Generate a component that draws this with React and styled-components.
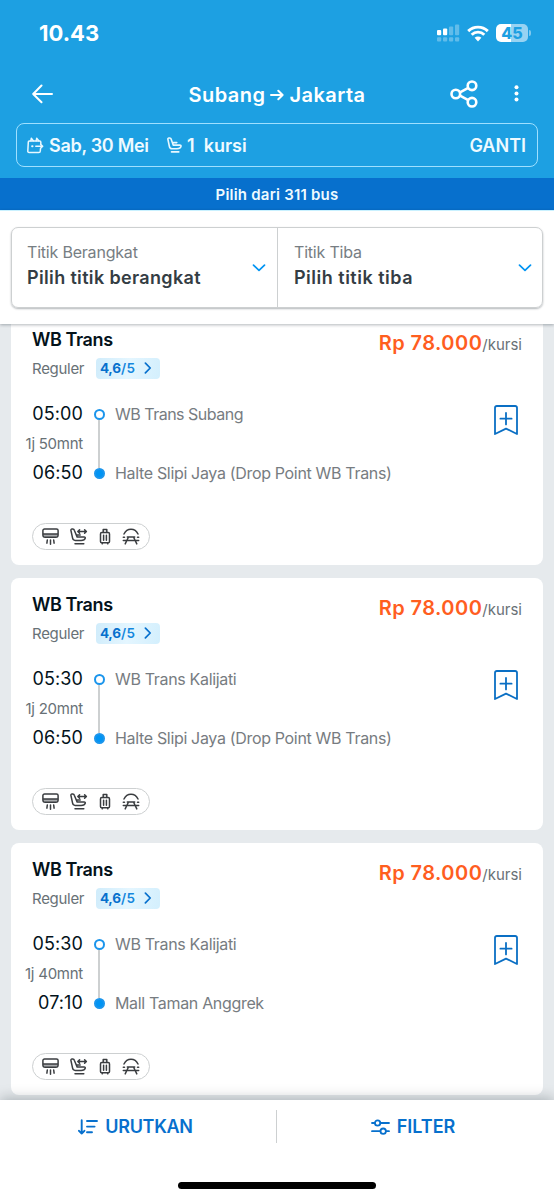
import React from 'react';
import styled, { createGlobalStyle } from 'styled-components';

const trips = [
    { id: 1, depart: '05:00', arrive: '06:50', duration: '1j 50mnt', from: 'WB Trans Subang', to: 'Halte Slipi Jaya (Drop Point WB Trans)' },
    { id: 2, depart: '05:30', arrive: '06:50', duration: '1j 20mnt', from: 'WB Trans Kalijati', to: 'Halte Slipi Jaya (Drop Point WB Trans)' },
    { id: 3, depart: '05:30', arrive: '07:10', duration: '1j 40mnt', from: 'WB Trans Kalijati', to: 'Mall Taman Anggrek' },
];

const SignalIcon = () => (
    <svg width="23" height="18" viewBox="0 0 23 18" fill="#fff">
        <rect x="0" y="6" width="4.2" height="5.2" rx="1" />
        <rect x="6" y="4.5" width="4.2" height="6.7" rx="1" />
        <g opacity=".3">
            <rect x="12" y="2.5" width="4.2" height="8.7" rx="1" />
            <rect x="18" y="0.5" width="4.2" height="10.7" rx="1" />
            <rect x="0" y="13.3" width="4.2" height="4.2" rx="1" />
            <rect x="6" y="13.3" width="4.2" height="4.2" rx="1" />
            <rect x="12" y="13.3" width="4.2" height="4.2" rx="1" />
            <rect x="18" y="13.3" width="4.2" height="4.2" rx="1" />
        </g>
    </svg>
);

const WifiIcon = () => (
    <svg width="22" height="17" viewBox="0 0 22 17" fill="none" stroke="#fff" strokeWidth="2.9">
        <path d="M1.2 6.1a14 14 0 0 1 19.6 0" />
        <path d="M4.7 9.7a9 9 0 0 1 12.6 0" />
        <path d="M11 16.4l-3.4-3.6a4.900 4.900 0 0 1 6.8 0z" fill="#fff" stroke="none" />
    </svg>
);

const BackIcon = () => (
    <svg width="22" height="20" viewBox="0 0 22 20" fill="none" stroke="#fff" strokeWidth="2" strokeLinecap="round" strokeLinejoin="round">
        <path d="M20 10H1.5M9.5 1.5L1.2 10l8.3 8.3" />
    </svg>
);

const ArrowIcon = () => (
    <svg width="14" height="12" viewBox="0 0 14 12" fill="none" stroke="#fff" strokeWidth="2" strokeLinecap="round" strokeLinejoin="round">
        <path d="M1 6h11.5M8.3 1.8L12.6 6l-4.3 4.2" />
    </svg>
);

const ShareIcon = () => (
    <svg width="28" height="28" viewBox="0 0 28 28" fill="none" stroke="#fff" strokeWidth="2.6">
        <circle cx="5.8" cy="14" r="4.3" />
        <circle cx="22" cy="5.8" r="4.3" />
        <circle cx="22" cy="22.2" r="4.3" />
        <path d="M10 12.3l7.8-4.1M10 15.7l7.8 4.1" />
    </svg>
);

const DotsIcon = () => (
    <svg width="5" height="17" viewBox="0 0 5 17" fill="#fff">
        <circle cx="2.5" cy="2.2" r="2" />
        <circle cx="2.5" cy="8.4" r="2" />
        <circle cx="2.5" cy="14.6" r="2" />
    </svg>
);

const DateIcon = () => (
    <svg width="17" height="17" viewBox="0 0 17 17" fill="none" stroke="#e8f8ff" strokeWidth="1.5" strokeLinecap="round" strokeLinejoin="round">
        <path d="M13.8 7V5.1a1.2 1.2 0 0 0-1.2-1.2H2.4a1.2 1.2 0 0 0-1.1 1.200L.8 14a1.4 1.4 0 0 0 1.3 1.6h9.6A1.6 1.6 0 0 0 13.3 14l.2-2.2" />
        <path d="M3.8 3.8l.5-2.5 2 2.5M9.2 3.8l.5-2.5 2 2.5M8.8 9.3h6.8M13.6 7.3l2.1 2-2.1 2" />
        <path d="M5.1 9.3h.4" strokeWidth="2" />
    </svg>
);

const SeatIcon = () => (
    <svg width="15" height="16" viewBox="0 0 15 16" fill="none" stroke="#e8f8ff" strokeWidth="1.6" strokeLinecap="round" strokeLinejoin="round">
        <path d="M2.7 1H1.9A1 1 0 0 0 .9 2.300L2.400 9.500a2.700 2.700 0 0 0 2.600 2.200h5c2.200 0 3.700-.9 4-2.400.1-.8-.4-1.200-1.100-1.200H6.200L4.100 2.100A1.400 1.400 0 0 0 2.700 1zM6.400 5.600h3.400M4.500 14.900h7.300" />
    </svg>
);

const ChevronDown = () => (
    <svg width="14" height="8" viewBox="0 0 14 8" fill="none" stroke="#0194f3" strokeWidth="1.7" strokeLinecap="round" strokeLinejoin="round">
        <path d="M1.5 1.2L7 6.4l5.500-5.200" />
    </svg>
);

const ChevronRight = () => (
    <svg width="8" height="12" viewBox="0 0 8 12" fill="none" stroke="#0770cd" strokeWidth="1.7" strokeLinecap="round" strokeLinejoin="round">
        <path d="M1.400 1.100L6.200 6l-4.800 4.900" />
    </svg>
);

const BookmarkIcon = () => (
    <svg width="26" height="32" viewBox="0 0 26 32" fill="none" stroke="#0a6fc4" strokeWidth="1.8" strokeLinecap="round" strokeLinejoin="round">
        <path d="M2 30V3.800A1.900 1.900 0 0 1 3.900 2h18.200A1.900 1.900 0 0 1 24 3.800V30l-11-5.400z" />
        <path d="M13 9v11.400M7.400 14.700h11.200" />
    </svg>
);

const AcIcon = () => (
    <svg width="17" height="17" viewBox="0 0 17 17" fill="none" stroke="#3a3d40" strokeWidth="1.5" strokeLinecap="round" strokeLinejoin="round">
        <path d="M1.5 6h14v1.300l-1.500 1.700H3L1.500 7.300z" fill="#a9abad" stroke="none" />
        <path d="M2.500 1h12A1.600 1.600 0 0 1 16.100 2.600v4.300A2.300 2.300 0 0 1 13.800 9.200H3.200A2.300 2.300 0 0 1 .9 6.900V2.600A1.600 1.600 0 0 1 2.500 1zM1 6h15" />
        <path d="M5.300 12l-.4 3.200M8.500 12v4.200M11.700 12l.4 3.200" />
    </svg>
);

const ReclineIcon = () => (
    <svg width="18" height="17" viewBox="0 0 18 17" fill="none" stroke="#3a3d40" strokeWidth="1.5" strokeLinecap="round" strokeLinejoin="round">
        <path d="M2.700 1H2A1.100 1.100 0 0 0 .9 2.300l1.700 7.900a2.700 2.700 0 0 0 2.600 2.200h5.900c2.200 0 3.800-.8 4.200-2.300.1-.8-.4-1.300-1.200-1.200l-6.900.2L4.300 2.200A1.600 1.600 0 0 0 2.700 1zM6.800 6.900h3.400M5 15.800h8.800" />
        <path d="M7.900 3.500h8.400M9.600 1.700L7.800 3.500l1.800 1.800M14.600 1.700l1.800 1.800-1.800 1.800" />
    </svg>
);

const LuggageIcon = () => (
    <svg width="12" height="17" viewBox="0 0 12 17" fill="none" stroke="#3a3d40" strokeWidth="1.5" strokeLinecap="round" strokeLinejoin="round">
        <rect x="1.500" y="4.600" width="9" height="10.200" rx="1.300" />
        <path d="M4.200 4.400V1.400h3.600v3M4.600 7.300v4.900M7.400 7.300v4.900M3.100 15.700h.3M8.600 15.700h.3" />
    </svg>
);

const RestAreaIcon = () => (
    <svg width="18" height="17" viewBox="0 0 18 17" fill="none" stroke="#3a3d40" strokeWidth="1.500" strokeLinecap="round" strokeLinejoin="round">
        <path d="M2 6C3.400 3 6 1.300 9 1.300S14.600 3 16 6" />
        <path d="M5.300 9h7.400M6.400 9.200L3.200 15.900M11.600 9.200l3.200 6.700M1.300 12.500h15.400M1.300 9.200h1.200M15.500 9.200h1.200" />
    </svg>
);

const SortIcon = () => (
    <svg width="20" height="16" viewBox="0 0 20 16" fill="none" stroke="#0770cd" strokeWidth="1.900" strokeLinecap="round" strokeLinejoin="round">
        <path d="M3.700 1.200v13.300M1 11.800l2.700 2.800 2.700-2.800M9 2h10M9 7.600h7.600M9 13.300h5" />
    </svg>
);

const FilterIcon = () => (
    <svg width="19" height="16" viewBox="0 0 19 16" fill="none" stroke="#0770cd" strokeWidth="1.800" strokeLinecap="round">
        <circle cx="6.600" cy="4" r="2.700" />
        <circle cx="12.200" cy="12.200" r="2.700" />
        <path d="M1 4h2.700M9.500 4H18M1 12.200h8.300M15.100 12.200H18" />
    </svg>
);

const Trip = (props) => (
    <Card>
        <CardTop>
            <div>
                <Name>WB Trans</Name>
                <Meta>
                    <Kind>Reguler</Kind>
                    <Rating><b>4,6</b><span>/5</span><ChevronRight /></Rating>
                </Meta>
            </div>
            <Price>Rp 78.000<Unit>/kursi</Unit></Price>
        </CardTop>
        <Route>
            <Times>
                <Time>{props.trip.depart}</Time>
                <Duration>{props.trip.duration}</Duration>
                <Time>{props.trip.arrive}</Time>
            </Times>
            <Track><Dot /><Line /><Dot $filled /></Track>
            <Stops>
                <Stop $tight={props.trip.id === 1}>{props.trip.from}</Stop>
                <Stop>{props.trip.to}</Stop>
            </Stops>
            <Save><BookmarkIcon /></Save>
        </Route>
        <Amenities><AcIcon /><ReclineIcon /><LuggageIcon /><RestAreaIcon /></Amenities>
    </Card>
);

export default function App() {
    return (
        <Screen>
            <Global />
            <Header>
                <StatusBar>
                    <Clock>10.43</Clock>
                    <Status>
                        <SignalIcon />
                        <WifiIcon />
                        <Battery><BatteryBody>45</BatteryBody><BatteryTip /></Battery>
                    </Status>
                </StatusBar>
                <TitleBar>
                    <IconButton><BackIcon /></IconButton>
                    <Title>Subang<ArrowIcon />Jakarta</Title>
                    <Actions>
                        <IconButton><ShareIcon /></IconButton>
                        <IconButton><DotsIcon /></IconButton>
                    </Actions>
                </TitleBar>
                <Search>
                    <DateIcon />
                    <SearchText $width="123px" $spacing="-0.3px">Sab, 30 Mei</SearchText>
                    <SeatIcon />
                    <SearchText>1 &nbsp;kursi</SearchText>
                    <Change>GANTI</Change>
                </Search>
            </Header>
            <Count>Pilih dari 311 bus</Count>
            <Points>
                <PointBox>
                    <Point>
                        <div>
                            <Label>Titik Berangkat</Label>
                            <Choice>Pilih titik berangkat</Choice>
                        </div>
                        <ChevronDown />
                    </Point>
                    <Point>
                        <div>
                            <Label>Titik Tiba</Label>
                            <Choice $spacing="0.5px">Pilih titik tiba</Choice>
                        </div>
                        <ChevronDown />
                    </Point>
                </PointBox>
            </Points>
            <List>{trips.map(trip => <Trip key={trip.id} trip={trip} />)}</List>
            <Footer>
                <Tools>
                    <Tool $spacing="-0.3px"><SortIcon />URUTKAN</Tool>
                    <Tool><FilterIcon />FILTER</Tool>
                </Tools>
                <HomeBar />
            </Footer>
        </Screen>
    )
}

const Global = createGlobalStyle`
    * { box-sizing: border-box; }
    body {
        margin: 0;
        font-family: Inter, "Liberation Sans", sans-serif;
        background: #ffffff;
    }
    svg { display: block; flex: none; }
    button {
        font: inherit;
        color: inherit;
        border: 0;
        padding: 0;
        background: transparent;
    }`;
const Screen = styled.div`
    display: flex;
    flex-direction: column;
    width: 554px;
    height: 1199px;
    overflow: hidden;
    white-space: nowrap;`;
const Header = styled.header`
    height: 178px;
    padding: 0 16px;
    background: #1da0e2;
    color: #ffffff;`;
const StatusBar = styled.div`
    display: flex;
    align-items: center;
    justify-content: space-between;
    height: 66px;
    padding: 0 7px 0 23px;`;
const Clock = styled.div`
    font-size: 22px;
    font-weight: 700;
    line-height: 26px;`;
const Status = styled.div`
    display: flex;
    align-items: center;
    gap: 7px;`;
const Battery = styled.div`
    display: flex;
    align-items: center;
    gap: 1px;`;
const BatteryBody = styled.div`
    width: 32px;
    height: 18px;
    border-radius: 5px;
    background: linear-gradient(90deg, #ffffff 46%, #98d3f2 46%);
    color: #1da0e2;
    font-size: 16px;
    font-weight: 800;
    line-height: 18px;
    text-align: center;`;
const BatteryTip = styled.div`
    width: 2px;
    height: 6px;
    border-radius: 0 2px 2px 0;
    background: #82c9ee;`;
const TitleBar = styled.div`
    display: grid;
    grid-template-columns: 1fr auto 1fr;
    align-items: center;
    height: 57px;
    padding: 0 19px 2px 16px;`;
const IconButton = styled.button`
    display: block;`;
const Title = styled.h1`
    display: flex;
    align-items: center;
    gap: 5px;
    margin: 2px 0 0 3px;
    font-size: 20px;
    font-weight: 600;
    line-height: 24px;
    letter-spacing: 0.45px;`;
const Actions = styled.div`
    display: flex;
    align-items: center;
    justify-content: flex-end;
    gap: 36px;`;
const Search = styled.div`
    display: flex;
    align-items: center;
    height: 44px;
    padding: 0 11px 0 10px;
    border: 1px solid #9fe0ff;
    border-radius: 8px;
    font-size: 18px;
    font-weight: 600;
    color: #eefaff;`;
const SearchText = styled.span`
    width: ${props => props.$width || 'auto'};
    padding-left: 5px;
    letter-spacing: ${props => props.$spacing || '0'};`;
const Change = styled.button`
    margin-left: auto;`;
const Count = styled.div`
    height: 32px;
    background: #0770cd;
    color: #eefaff;
    font-size: 15px;
    font-weight: 600;
    line-height: 33px;
    letter-spacing: 0.22px;
    text-align: center;`;
const Points = styled.div`
    height: 114px;
    padding: 16px 11px 0;
    border-top: 1px solid #c9f1ff;
    background: #ffffff;
    box-shadow: 0 1px 3px rgba(3, 18, 26, 0.3);
    z-index: 1;`;
const PointBox = styled.div`
    display: grid;
    grid-template-columns: 265px 1fr;
    height: 81px;
    border: 1px solid #cdd0d1;
    border-radius: 7px;
    box-shadow: 0 1px 2px rgba(3, 18, 26, 0.3);`;
const Point = styled.div`
    display: flex;
    align-items: center;
    justify-content: space-between;
    padding: 0 11px 0 15px;
    & + & {
        padding: 0 10px 0 16px;
        border-left: 1px solid #cdd0d1;
    }`;
const Label = styled.div`
    margin-top: -3px;
    font-size: 16px;
    line-height: 24px;
    letter-spacing: -0.2px;
    color: #777e83;`;
const Choice = styled.div`
    font-size: 18px;
    font-weight: 600;
    line-height: 28px;
    letter-spacing: ${props => props.$spacing || '0.35px'};
    color: #343d44;`;
const List = styled.main`
    display: flex;
    flex-direction: column;
    gap: 13px;
    height: 776px;
    padding: 0 11px;
    overflow: hidden;
    background: #e6eaed;`;
const Card = styled.article`
    flex: none;
    height: 252px;
    padding: 14px 21px 0 14px;
    border-radius: 8px;
    background: #ffffff;
    &:first-child {
        margin-top: -11px;
    }`;
const CardTop = styled.div`
    display: flex;
    justify-content: space-between;
    height: 72px;
    padding-left: 7px;`;
const Name = styled.h2`
    margin: 0;
    font-size: 18px;
    font-weight: 600;
    line-height: 26px;
    letter-spacing: -0.4px;
    color: #03121a;`;
const Meta = styled.div`
    display: flex;
    align-items: center;
    height: 22px;
    margin-top: 4px;`;
const Kind = styled.span`
    width: 64px;
    font-size: 15px;
    letter-spacing: -0.3px;
    color: #687176;`;
const Rating = styled.span`
    display: flex;
    align-items: center;
    width: 64px;
    height: 21px;
    padding-left: 4px;
    border-radius: 4px;
    background: linear-gradient(100deg, #d0ecfb, #e4f6ff 50%, #d3effd);
    color: #0770cd;
    font-size: 13.5px;
    b {
        width: 21px;
        font-weight: 700;
        letter-spacing: -0.3px;
    }
    span {
        width: 23px;
        font-weight: 600;
        letter-spacing: 0.3px;
        color: #1587dd;
    }`;
const Price = styled.div`
    font-size: 20px;
    font-weight: 600;
    line-height: 32px;
    letter-spacing: 0.45px;
    color: #ff5e1f;`;
const Unit = styled.span`
    font-size: 15px;
    font-weight: 400;
    letter-spacing: 0;
    color: #687176;`;
const Route = styled.div`
    display: flex;
    height: 90px;`;
const Times = styled.div`
    display: flex;
    flex-direction: column;
    align-items: flex-end;
    width: 58px;`;
const Time = styled.div`
    font-size: 18px;
    line-height: 30px;
    letter-spacing: 0.1px;
    color: #03121a;`;
const Duration = styled.div`
    font-size: 15px;
    line-height: 29px;
    letter-spacing: -0.25px;
    color: #687176;`;
const Track = styled.div`
    display: flex;
    flex-direction: column;
    align-items: center;
    width: 12px;
    height: 70px;
    margin: 10px 10px 0 10px;`;
const Dot = styled.div`
    width: 11px;
    height: 11px;
    border: 2px solid #1b95ec;
    border-radius: 50%;
    background: ${props => props.$filled ? '#0194f3' : '#ffffff'};`;
const Line = styled.div`
    flex: 1;
    width: 2px;
    background: #cdd0d1;`;
const Stops = styled.div`
    display: flex;
    flex-direction: column;
    gap: 29px;`;
const Stop = styled.div`
    font-size: 16px;
    line-height: 30px;
    letter-spacing: ${props => props.$tight ? '-0.5px' : '-0.33px'};
    color: #777c81;`;
const Save = styled.button`
    margin: 5px 3px auto auto;`;
const Amenities = styled.div`
    display: flex;
    align-items: center;
    justify-content: space-between;
    width: 118px;
    height: 27px;
    margin: 34px 0 0 7px;
    padding: 0 9px 0 9px;
    border: 1px solid #cdd0d1;
    border-radius: 14px;`;
const Footer = styled.footer`
    display: flex;
    flex-direction: column;
    justify-content: space-between;
    height: 99px;
    padding: 10px 0 10px;
    background: #ffffff;
    box-shadow: 0 -2px 12px rgba(3, 18, 26, 0.25);
    z-index: 1;`;
const Tools = styled.div`
    display: grid;
    grid-template-columns: 276px 278px;
    height: 33px;`;
const Tool = styled.button`
    display: flex;
    align-items: center;
    justify-content: center;
    gap: 7px;
    padding-right: 5px;
    font-size: 18px;
    font-weight: 600;
    letter-spacing: ${props => props.$spacing || '0'};
    color: #0770cd;
    & + & {
        border-left: 1px solid #cdd0d1;
    }`;
const HomeBar = styled.div`
    width: 198px;
    height: 7px;
    margin: 0 auto;
    border-radius: 4px;
    background: #000000;`;
